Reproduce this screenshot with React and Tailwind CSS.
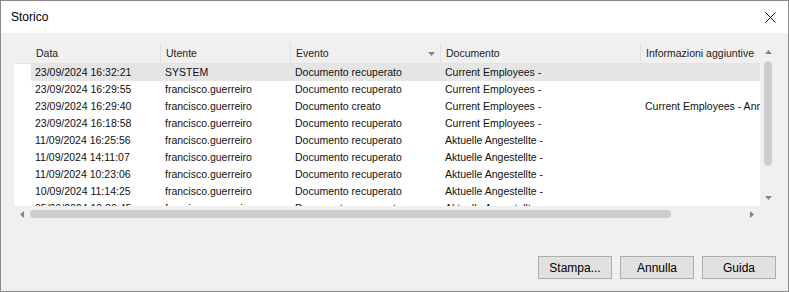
import React from 'react';

const COLS = [
  { key: 'data', label: 'Data', w: 130 },
  { key: 'utente', label: 'Utente', w: 130 },
  { key: 'evento', label: 'Evento', w: 150, sort: true },
  { key: 'doc', label: 'Documento', w: 200 },
  { key: 'info', label: 'Informazioni aggiuntive', w: 160 },
];

const ROWS = [
  ['23/09/2024 16:32:21', 'SYSTEM', 'Documento recuperato', 'Current Employees -', ''],
  ['23/09/2024 16:29:55', 'francisco.guerreiro', 'Documento recuperato', 'Current Employees -', ''],
  ['23/09/2024 16:29:40', 'francisco.guerreiro', 'Documento creato', 'Current Employees -', 'Current Employees - Annual'],
  ['23/09/2024 16:18:58', 'francisco.guerreiro', 'Documento recuperato', 'Current Employees -', ''],
  ['11/09/2024 16:25:56', 'francisco.guerreiro', 'Documento recuperato', 'Aktuelle Angestellte -', ''],
  ['11/09/2024 14:11:07', 'francisco.guerreiro', 'Documento recuperato', 'Aktuelle Angestellte -', ''],
  ['11/09/2024 10:23:06', 'francisco.guerreiro', 'Documento recuperato', 'Aktuelle Angestellte -', ''],
  ['10/09/2024 11:14:25', 'francisco.guerreiro', 'Documento recuperato', 'Aktuelle Angestellte -', ''],
  ['05/09/2024 10:30:45', 'francisco.guerreiro', 'Documento recuperato', 'Aktuelle Angestellte -', ''],
];

const Arrow = ({ dir }) => {
  const pts = {
    up: '0,4 3.5,0 7,4',
    down: '0,0 7,0 3.5,4',
    left: '4,0 4,7 0,3.5',
    right: '0,0 0,7 4,3.5',
  }[dir];
  const vert = dir === 'up' || dir === 'down';
  return (
    <svg width={vert ? 7 : 4} height={vert ? 4 : 7} viewBox={vert ? '0 0 7 4' : '0 0 4 7'}>
      <polygon points={pts} fill="#858585" />
    </svg>
  );
};

const Button = ({ children }) => (
  <button className="w-[74px] h-[23px] border border-[#adadad] bg-[#e1e1e1] text-[12px] text-black">
    {children}
  </button>
);

export default function App() {
  return (
    <div
      className="w-[789px] h-[292px] flex flex-col border border-[#8a8a8a] bg-[#f0f0f0] overflow-hidden"
      style={{ fontFamily: '"Liberation Sans", Arial, sans-serif' }}
    >
      <div className="h-[32px] shrink-0 bg-white flex items-center justify-between pl-[10px] pr-[12px]">
        <span className="text-[12px] text-black">Storico</span>
        <svg width="11" height="11" viewBox="0 0 11 11">
          <path d="M0.5 0.5 L10.5 10.5 M10.5 0.5 L0.5 10.5" stroke="#111" strokeWidth="1" />
        </svg>
      </div>

      <div className="flex-1 flex flex-col pt-[11px] pl-[13px] pr-[12px] pb-[12px]">
        <div className="w-[762px] h-[178px] grid grid-cols-[746px_16px] grid-rows-[162px_16px]">
          {/* list */}
          <div className="bg-white overflow-hidden text-[10.5px] text-[#111]">
            <div className="h-[20px] flex bg-[#f0f0f0] border-b border-[#e3e3e3] text-[#222]">
              <div className="w-[17px] shrink-0" />
              {COLS.map((c) => (
                <div
                  key={c.key}
                  className="shrink-0 h-full flex items-center justify-between pl-[5px] pr-[5px] border-r border-[#e0e0e0]"
                  style={{ width: c.w }}
                >
                  <span className="whitespace-nowrap">{c.label}</span>
                  {c.sort && <Arrow dir="down" />}
                </div>
              ))}
            </div>
            {ROWS.map((r, i) => (
              <div key={i} className="h-[17px] flex">
                <div className="w-[17px] shrink-0" />
                <div className={`flex-1 flex ${i === 0 ? 'bg-[#e5e5e5]' : ''}`}>
                  {COLS.map((c, j) => (
                    <div
                      key={c.key}
                      className="shrink-0 h-full flex items-center pl-[4px] whitespace-nowrap overflow-hidden"
                      style={{ width: c.w }}
                    >
                      {r[j]}
                    </div>
                  ))}
                </div>
              </div>
            ))}
          </div>

          {/* vertical scrollbar */}
          <div className="flex flex-col items-center bg-[#f0f0f0]">
            <div className="h-[16px] flex items-center justify-center">
              <Arrow dir="up" />
            </div>
            <div className="flex-1 w-full flex justify-center">
              <div className="w-[8px] h-[105px] mt-[1px] rounded-full bg-[#cdcdcd]" />
            </div>
            <div className="h-[16px] flex items-center justify-center">
              <Arrow dir="down" />
            </div>
          </div>

          {/* horizontal scrollbar */}
          <div className="flex items-center bg-[#f0f0f0]">
            <div className="w-[16px] flex items-center justify-center">
              <Arrow dir="left" />
            </div>
            <div className="flex-1 h-full flex items-center">
              <div className="w-[641px] h-[8px] rounded-full bg-[#cdcdcd]" />
            </div>
            <div className="w-[16px] flex items-center justify-center">
              <Arrow dir="right" />
            </div>
          </div>
          <div className="bg-[#f0f0f0]" />
        </div>

        <div className="flex-1" />
        <div className="flex justify-end gap-[8px]">
          <Button>Stampa...</Button>
          <Button>Annulla</Button>
          <Button>Guida</Button>
        </div>
      </div>
    </div>
  );
}
